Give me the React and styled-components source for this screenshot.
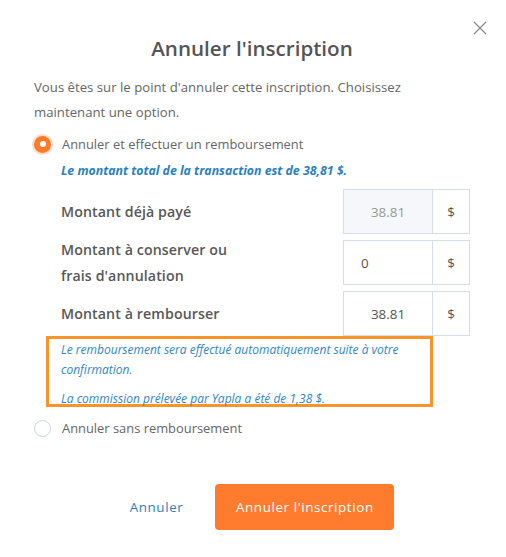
import React, { useState } from "react";
import styled, { createGlobalStyle } from "styled-components";

const GlobalStyle = createGlobalStyle`
    body {
        margin: 0;
        background: #ffffff;
        font-family: "Open Sans", "Noto Sans", sans-serif;
    }
`;

const Modal = styled.div`
    position: relative;
    width: 506px;
    height: 557px;
    box-sizing: border-box;
    padding: 34px 36px 0 34px;
    background: #ffffff;
    color: #555555;
`;

const Close = styled.button`
    position: absolute;
    top: 20px;
    right: 18px;
    width: 16px;
    height: 16px;
    padding: 0;
    border: none;
    background: none;
    cursor: pointer;
`;

const Title = styled.h2`
    margin: 0;
    font-size: 20.6px;
    line-height: 28px;
    font-weight: 600;
    text-align: center;
    color: #555555;
`;

const Intro = styled.p`
    margin: 13px 0 0 0;
    font-size: 13.2px;
    line-height: 25px;
    color: #666666;
`;

const Option = styled.label`
    display: flex;
    align-items: center;
    gap: 11px;
    margin-top: ${(props) => props.top}px;
    font-size: 12.9px;
    line-height: 20px;
    color: #666666;
    cursor: pointer;
`;

const Radio = styled.span`
    box-sizing: border-box;
    width: 17px;
    height: 17px;
    border-radius: 50%;
    display: flex;
    align-items: center;
    justify-content: center;
    background: ${(props) => (props.checked ? "#ff7a2b" : "#ffffff")};
    border: ${(props) => (props.checked ? "none" : "1.5px solid #c9d3df")};
    box-shadow: ${(props) => (props.checked ? "0 0 0 2px rgba(255, 122, 43, 0.25)" : "none")};

    &::after {
        content: "";
        display: ${(props) => (props.checked ? "block" : "none")};
        width: 6px;
        height: 6px;
        border-radius: 50%;
        background: #ffffff;
    }
`;

const Details = styled.div`
    margin-left: 27px;
`;

const Total = styled.p`
    margin: 7px 0 0 0;
    font-size: 12.3px;
    line-height: 20px;
    font-weight: 700;
    font-style: italic;
    color: #2b7fc0;
`;

const Rows = styled.div`
    display: flex;
    flex-direction: column;
    gap: 6px;
    margin-top: 8px;
`;

const Row = styled.div`
    display: flex;
    align-items: center;
    justify-content: space-between;
    height: 45px;
`;

const RowLabel = styled.span`
    width: 200px;
    font-size: 14.2px;
    line-height: 26px;
    font-weight: 600;
    color: #585858;
    letter-spacing: 0.1px;
`;

const Field = styled.div`
    display: flex;
    width: 127px;
    height: 45px;
`;

const Input = styled.div`
    box-sizing: border-box;
    width: 90px;
    height: 45px;
    display: flex;
    align-items: center;
    padding-left: ${(props) => (props.left ? "17px" : "0")};
    justify-content: ${(props) => (props.left ? "flex-start" : "center")};
    border: 1px solid #d5dde8;
    background: ${(props) => (props.disabled ? "#f5f7fa" : "#ffffff")};
    color: ${(props) => (props.disabled ? "#999999" : "#555555")};
    font-size: 13.4px;
`;

const Addon = styled.div`
    box-sizing: border-box;
    width: 37px;
    height: 45px;
    display: flex;
    align-items: center;
    justify-content: center;
    border: 1px solid #d5dde8;
    border-left: none;
    font-size: 13.4px;
    color: #555555;
`;

const Notice = styled.div`
    box-sizing: border-box;
    width: 387px;
    margin-left: -15px;
    border: 3px solid #f7952a;
    padding: 1px 10px 0 12px;
    height: 71px;
    font-size: 12px;
    font-style: italic;
    color: #3186c4;
`;

const NoticeLine = styled.p`
    margin: ${(props) => props.top || 0}px 0 0 0;
    line-height: 20px;
`;

const Footer = styled.div`
    display: flex;
    align-items: center;
    justify-content: center;
    gap: 32px;
    margin-top: 46px;
    padding-left: 20px;
`;

const LinkButton = styled.button`
    border: none;
    background: none;
    padding: 0;
    font-family: inherit;
    font-size: 13.4px;
    letter-spacing: 0.6px;
    color: #2f7fbd;
    cursor: pointer;
`;

const PrimaryButton = styled.button`
    width: 179px;
    height: 46px;
    border: none;
    border-radius: 4px;
    background: #ff7b2e;
    color: #ffffff;
    font-family: inherit;
    font-size: 13.4px;
    letter-spacing: 0.6px;
    cursor: pointer;
`;

function CloseIcon() {
    return (
        <svg width="16" height="16" viewBox="0 0 16 16">
            <path d="M2 2 L14 14 M14 2 L2 14" stroke="#888888" strokeWidth="1.2" />
        </svg>
    );
}

const rows = [
    { label: "Montant déjà payé", value: "38.81", disabled: true },
    { label: "Montant à conserver ou frais d'annulation", value: "0", left: true },
    { label: "Montant à rembourser", value: "38.81" },
];

export default function App() {
    const [refund, setRefund] = useState(true);

    return (
        <>
            <GlobalStyle />
            <Modal>
                <Close aria-label="Fermer">
                    <CloseIcon />
                </Close>
                <Title>Annuler l'inscription</Title>
                <Intro>
                    Vous êtes sur le point d'annuler cette inscription. Choisissez maintenant une option.
                </Intro>

                <Option top={9} onClick={() => setRefund(true)}>
                    <Radio checked={refund} />
                    Annuler et effectuer un remboursement
                </Option>
                <Details>
                    <Total>Le montant total de la transaction est de 38,81 $.</Total>
                    <Rows>
                        {rows.map((row) => (
                            <Row key={row.label}>
                                <RowLabel>{row.label}</RowLabel>
                                <Field>
                                    <Input disabled={row.disabled} left={row.left}>{row.value}</Input>
                                    <Addon>$</Addon>
                                </Field>
                            </Row>
                        ))}
                    </Rows>
                    <Notice>
                        <NoticeLine>Le remboursement sera effectué automatiquement suite à votre confirmation.</NoticeLine>
                        <NoticeLine top={9}>La commission prélevée par Yapla a été de 1,38 $.</NoticeLine>
                    </Notice>
                </Details>

                <Option top={11} onClick={() => setRefund(false)}>
                    <Radio checked={!refund} />
                    Annuler sans remboursement
                </Option>

                <Footer>
                    <LinkButton>Annuler</LinkButton>
                    <PrimaryButton>Annuler l'inscription</PrimaryButton>
                </Footer>
            </Modal>
        </>
    );
}
